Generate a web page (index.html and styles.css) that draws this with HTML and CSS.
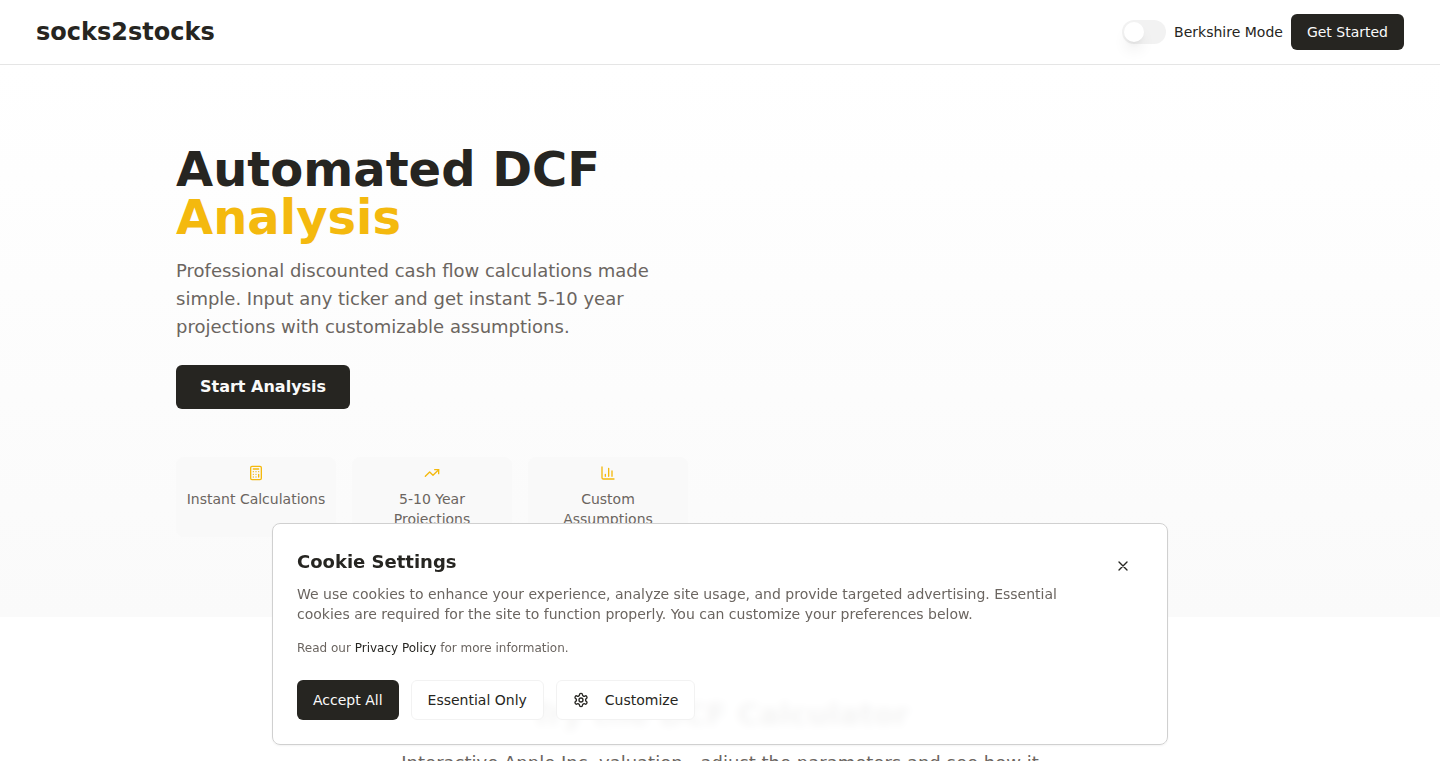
FILE: index.html
```html
<!DOCTYPE html>
<html lang="en">
<head>
  <meta charset="UTF-8">
  <meta name="viewport" content="width=device-width, initial-scale=1.0">
  <title>socks2stocks</title>
  <link rel="stylesheet" href="styles.css">
</head>
<body>
  <header class="site-header">
    <a href="#" class="logo">socks2stocks</a>
    <nav class="header-nav">
      <input type="checkbox" id="berkshire-mode" class="switch">
      <label for="berkshire-mode">Berkshire Mode</label>
      <button type="button" class="btn btn-primary btn-small">Get Started</button>
    </nav>
  </header>

  <main>
    <section class="hero">
      <div class="container">
        <div class="hero-content">
          <h1>Automated DCF <span class="accent">Analysis</span></h1>
          <p class="hero-text">Professional discounted cash flow calculations made simple. Input any ticker and get instant 5-10 year projections with customizable assumptions.</p>
          <button type="button" class="btn btn-primary btn-large">Start Analysis</button>

          <div class="features">
            <div class="feature">
              <svg class="icon" viewBox="0 0 24 24" aria-hidden="true">
                <rect width="16" height="20" x="4" y="2" rx="2"/>
                <path d="M8 6h8M16 14v4M16 10h.01M12 10h.01M8 10h.01M12 14h.01M8 14h.01M12 18h.01M8 18h.01"/>
              </svg>
              <span>Instant Calculations</span>
            </div>
            <div class="feature">
              <svg class="icon" viewBox="0 0 24 24" aria-hidden="true">
                <path d="M22 7l-8.5 8.5-5-5L2 17"/>
                <path d="M16 7h6v6"/>
              </svg>
              <span>5-10 Year Projections</span>
            </div>
            <div class="feature">
              <svg class="icon" viewBox="0 0 24 24" aria-hidden="true">
                <path d="M3 3v16a2 2 0 0 0 2 2h16"/>
                <path d="M18 17V9M13 17V5M8 17v-3"/>
              </svg>
              <span>Custom Assumptions</span>
            </div>
          </div>
        </div>
      </div>
    </section>

    <section class="calculator">
      <h2>Try the DCF Calculator</h2>
      <p>Interactive Apple Inc. valuation - adjust the parameters and see how it affects the intrinsic value.</p>
    </section>
  </main>

  <!-- Cookie banner -->
  <div class="cookie-banner" role="dialog" aria-labelledby="cookie-title">
    <div class="cookie-top">
      <div class="cookie-text">
        <h3 id="cookie-title">Cookie Settings</h3>
        <p>We use cookies to enhance your experience, analyze site usage, and provide targeted advertising. Essential cookies are required for the site to function properly. You can customize your preferences below.</p>
        <p class="cookie-note">Read our <a href="#">Privacy Policy</a> for more information.</p>
      </div>
      <button type="button" class="close-btn" aria-label="Close">
        <svg class="icon" viewBox="0 0 24 24" aria-hidden="true">
          <path d="M18 6L6 18M6 6l12 12"/>
        </svg>
      </button>
    </div>
    <div class="cookie-actions">
      <button type="button" class="btn btn-primary">Accept All</button>
      <button type="button" class="btn btn-outline">Essential Only</button>
      <button type="button" class="btn btn-outline">
        <svg class="icon" viewBox="0 0 24 24" aria-hidden="true">
          <path d="M12.22 2h-.44a2 2 0 0 0-2 2v.18a2 2 0 0 1-1 1.73l-.43.25a2 2 0 0 1-2 0l-.15-.08a2 2 0 0 0-2.73.73l-.22.38a2 2 0 0 0 .73 2.73l.15.1a2 2 0 0 1 1 1.72v.51a2 2 0 0 1-1 1.74l-.15.09a2 2 0 0 0-.73 2.73l.22.38a2 2 0 0 0 2.73.73l.15-.08a2 2 0 0 1 2 0l.43.25a2 2 0 0 1 1 1.73V20a2 2 0 0 0 2 2h.44a2 2 0 0 0 2-2v-.18a2 2 0 0 1 1-1.73l.43-.25a2 2 0 0 1 2 0l.15.08a2 2 0 0 0 2.73-.73l.22-.39a2 2 0 0 0-.73-2.73l-.15-.08a2 2 0 0 1-1-1.74v-.5a2 2 0 0 1 1-1.74l.15-.09a2 2 0 0 0 .73-2.73l-.22-.38a2 2 0 0 0-2.73-.73l-.15.08a2 2 0 0 1-2 0l-.43-.25a2 2 0 0 1-1-1.73V4a2 2 0 0 0-2-2z"/>
          <circle cx="12" cy="12" r="3"/>
        </svg>
        Customize
      </button>
    </div>
  </div>
</body>
</html>
```
FILE: styles.css
```css
:root {
  --background: #ffffff;
  --text-color: #262521;
  --muted-color: #6b6560;
  --accent-color: #f4b90e;
  --border-color: #e5e5e5;
  --soft-gray: #f2f2f2;
}

* {
  box-sizing: border-box;
}

body {
  margin: 0;
  font-family: "DejaVu Sans", sans-serif;
  font-size: 14px;
  line-height: 20px;
  background: var(--background);
  color: var(--text-color);
}

h1, h2, h3, p {
  margin: 0;
}

a {
  color: var(--text-color);
  text-decoration: none;
}

.icon {
  width: 16px;
  height: 16px;
  flex-shrink: 0;
  fill: none;
  stroke: currentColor;
  stroke-width: 2;
  stroke-linecap: round;
  stroke-linejoin: round;
}

.btn {
  display: inline-flex;
  align-items: center;
  justify-content: center;
  gap: 16px;
  height: 40px;
  padding: 0 16px;
  border: none;
  border-radius: 6px;
  font-family: inherit;
  font-size: 14px;
  line-height: 20px;
  white-space: nowrap;
  cursor: pointer;
}

.btn-primary {
  background: var(--text-color);
  color: #fafafa;
}

.btn-outline {
  background: var(--background);
  border: 1px solid var(--soft-gray);
  color: var(--text-color);
}

.btn-small {
  height: 36px;
}

.btn-large {
  height: 44px;
  padding: 0 24px;
  font-size: 16px;
  font-weight: bold;
}

/* Header */
.site-header {
  display: flex;
  align-items: center;
  justify-content: space-between;
  height: 65px;
  padding: 0 36px;
  border-bottom: 1px solid var(--border-color);
}

.logo {
  font-size: 24px;
  line-height: 32px;
  font-weight: bold;
}

.header-nav {
  display: flex;
  align-items: center;
  gap: 8px;
}

.switch {
  appearance: none;
  width: 44px;
  height: 24px;
  margin: 0;
  padding: 2px;
  border-radius: 12px;
  background: var(--soft-gray);
  cursor: pointer;
}

.switch::before {
  content: "";
  display: block;
  width: 20px;
  height: 20px;
  border-radius: 50%;
  background: var(--background);
  box-shadow: 0 10px 15px -3px rgba(0, 0, 0, 0.1), 0 4px 6px -4px rgba(0, 0, 0, 0.1);
}

.switch:checked {
  background: var(--text-color);
}

.switch:checked::before {
  margin-left: 20px;
}

/* Hero */
.hero {
  padding: 80px 0;
  background: linear-gradient(to bottom, #ffffff, #fafafa);
}

.container {
  max-width: 1152px;
  margin: 0 auto;
  padding: 0 32px;
}

.hero-content {
  max-width: 512px;
}

.hero h1 {
  font-size: 48px;
  line-height: 48px;
}

.accent {
  display: block;
  color: var(--accent-color);
}

.hero-text {
  margin: 16px 0 24px;
  font-size: 18px;
  line-height: 28px;
  color: var(--muted-color);
}

.features {
  display: grid;
  grid-template-columns: repeat(3, 1fr);
  gap: 16px;
  margin-top: 48px;
}

.feature {
  display: flex;
  flex-direction: column;
  align-items: center;
  gap: 8px;
  padding: 8px;
  border-radius: 8px;
  background: #f9f9f9;
  color: var(--muted-color);
  text-align: center;
}

.feature .icon {
  color: var(--accent-color);
}

/* Calculator */
.calculator {
  padding: 80px 32px;
  text-align: center;
}

.calculator h2 {
  font-size: 30px;
  line-height: 36px;
}

.calculator p {
  max-width: 672px;
  margin: 16px auto 0;
  font-size: 18px;
  line-height: 28px;
  color: var(--muted-color);
}

/* Cookie banner */
.cookie-banner {
  position: fixed;
  left: 16px;
  right: 16px;
  bottom: 16px;
  max-width: 896px;
  margin: 0 auto;
  padding: 24px;
  border: 1px solid #d0d0d0;
  border-radius: 8px;
  background: rgba(255, 255, 255, 0.95);
  backdrop-filter: blur(4px);
  box-shadow: 0 1px 2px rgba(0, 0, 0, 0.05);
}

.cookie-top {
  display: flex;
  align-items: flex-start;
  justify-content: space-between;
  gap: 16px;
}

.cookie-text {
  color: var(--muted-color);
}

.cookie-text h3 {
  margin-bottom: 8px;
  font-size: 18px;
  line-height: 28px;
  color: var(--text-color);
}

.cookie-text .cookie-note {
  margin-top: 16px;
  font-size: 12px;
  line-height: 16px;
}

.close-btn {
  display: flex;
  align-items: center;
  justify-content: center;
  flex-shrink: 0;
  width: 40px;
  height: 36px;
  padding: 0;
  border: none;
  background: none;
  color: var(--text-color);
  cursor: pointer;
}

.cookie-actions {
  display: flex;
  flex-wrap: wrap;
  gap: 12px;
  margin-top: 24px;
}
```
